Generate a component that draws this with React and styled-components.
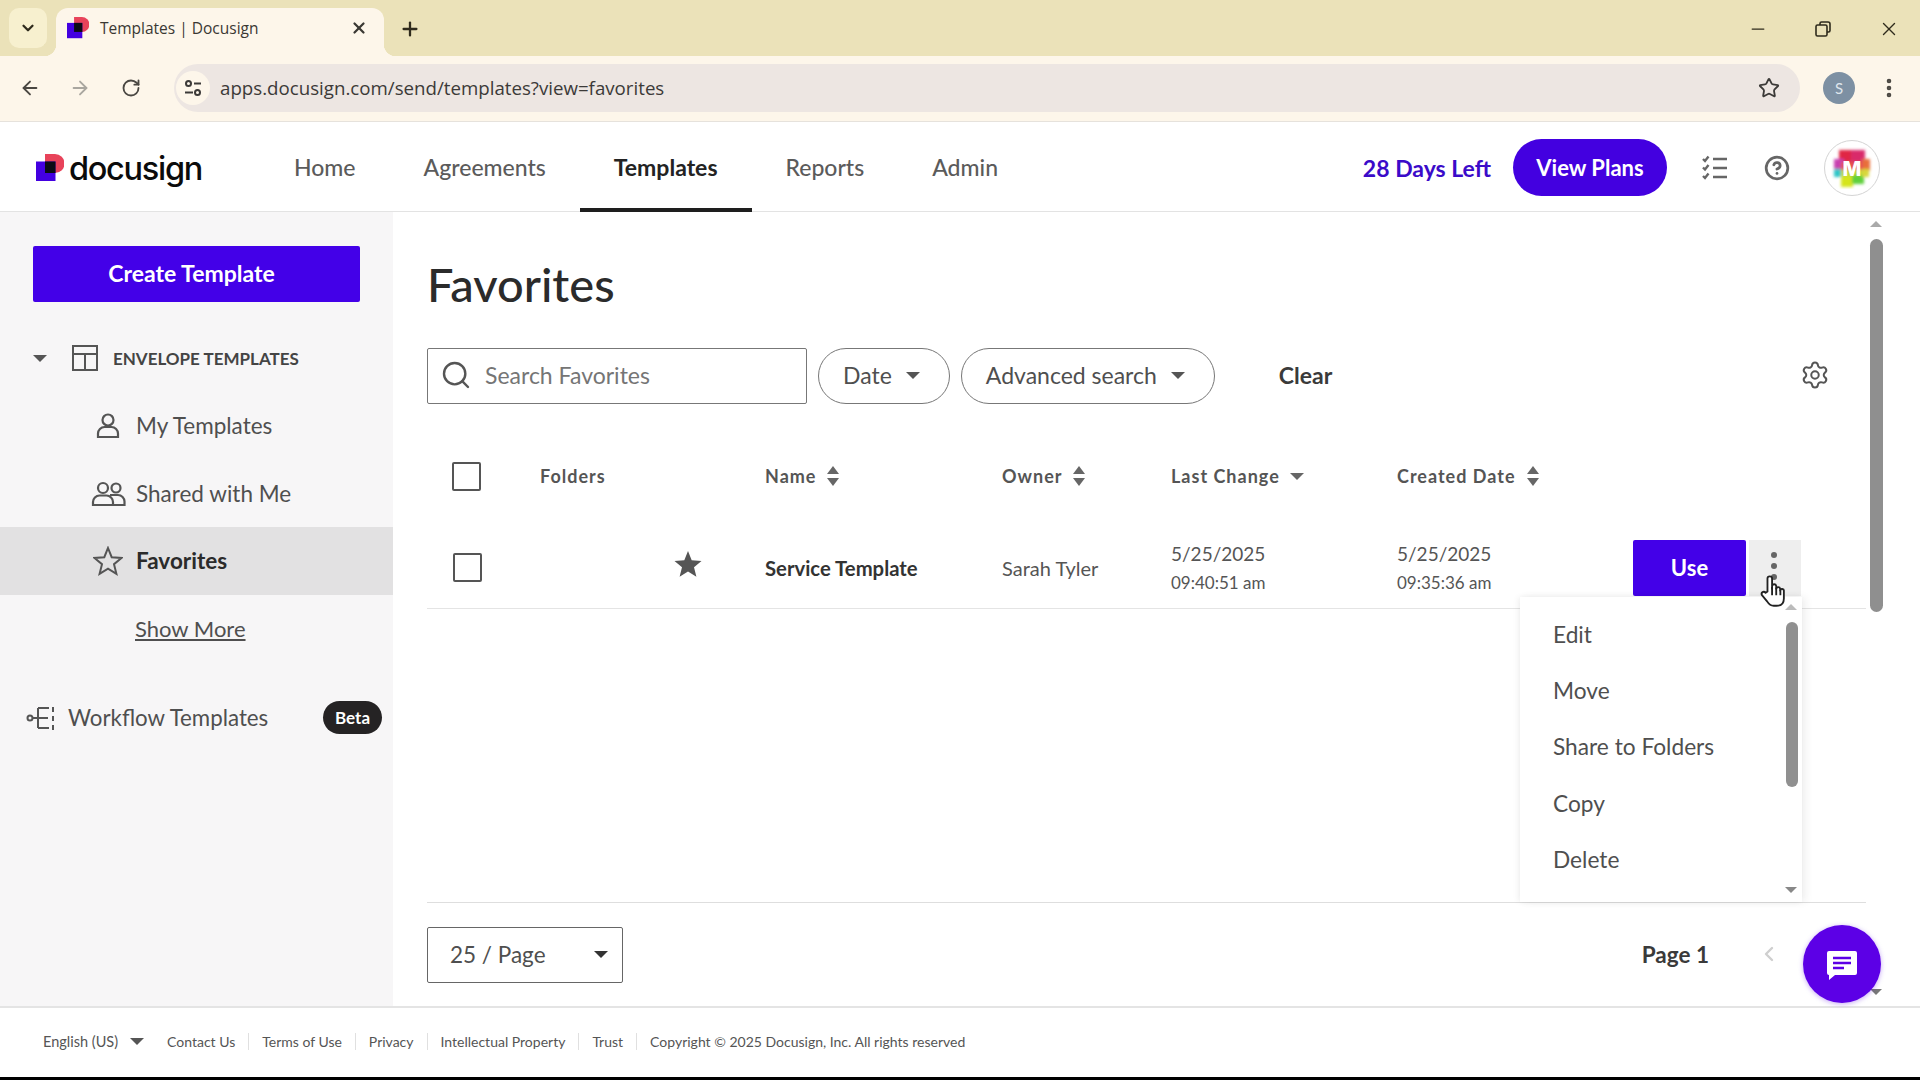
import styled, { createGlobalStyle } from "styled-components";
import {
  ArrowLeft,
  ArrowRight,
  ChevronDown,
  ChevronLeft,
  CircleHelp,
  EllipsisVertical,
  Minus,
  Plus,
  RotateCw,
  Search,
  Settings,
  Star,
  X,
} from "lucide-react";

const GlobalStyle = createGlobalStyle`
  html, body {
    margin: 0;
    padding: 0;
    background: #000;
  }
  body {
    font-family: Lato, "Open Sans", sans-serif;
    color: #3d3d3d;
  }
  * {
    box-sizing: border-box;
  }
`;

const Page = styled.div`
  width: 1920px;
  height: 1080px;
  display: flex;
  flex-direction: column;
  overflow: hidden;
  background: #fff;
`;

/* browser chrome */
const TabStrip = styled.div`
  height: 56px;
  flex: none;
  background: #ebe2b9;
  display: flex;
  align-items: flex-end;
  padding-left: 9px;
  color: #2f2b1c;
`;
const TabSearch = styled.div`
  width: 38px;
  height: 40px;
  margin-bottom: 8px;
  border-radius: 10px;
  background: #f7f0cf;
  display: flex;
  align-items: center;
  justify-content: center;
`;
const Tab = styled.div`
  position: relative;
  width: 328px;
  height: 48px;
  margin-left: 9px;
  border-radius: 12px 12px 0 0;
  background: #fdf6ea;
  display: flex;
  align-items: center;
  padding: 0 16px 8px 11px;
  font-family: "Open Sans", sans-serif;
  font-size: 15.5px;
  color: #3a3833;
  &::before,
  &::after {
    content: "";
    position: absolute;
    bottom: 0;
    width: 12px;
    height: 12px;
  }
  &::before {
    left: -12px;
    background: radial-gradient(circle at 0 0, #ebe2b9 12px, #fdf6ea 12.5px);
  }
  &::after {
    right: -12px;
    background: radial-gradient(circle at 100% 0, #ebe2b9 12px, #fdf6ea 12.5px);
  }
`;
const TabTitle = styled.span`
  flex: 1;
  margin-left: 11px;
`;
const NewTab = styled.div`
  margin: 0 0 16px 15px;
  display: flex;
`;
const WindowControls = styled.div`
  margin: 0 20px 16px auto;
  display: flex;
  gap: 45px;
  align-items: center;
`;

const Toolbar = styled.div`
  height: 66px;
  flex: none;
  background: #fdf6ea;
  border-bottom: 1px solid #e6e2dc;
  display: flex;
  align-items: center;
  padding: 0 0 2px 19px;
  color: #4a4742;
`;
const NavArrows = styled.div`
  display: flex;
  gap: 28px;
  align-items: center;
`;
const ReloadSlot = styled.span`
  display: flex;
  margin-left: 2px;
`;
const AddressBar = styled.div`
  width: 1626px;
  height: 48px;
  margin-left: 33px;
  border-radius: 24px;
  background: #ede6e2;
  display: flex;
  align-items: center;
  padding: 0 20px 0 0;
  font-family: "Open Sans", sans-serif;
  font-size: 18.7px;
  color: #3c3a38;
`;
const SiteBadge = styled.div`
  width: 34px;
  height: 34px;
  margin: 0 10px 0 2px;
  border-radius: 50%;
  background: #fdf6ea;
  display: flex;
  align-items: center;
  justify-content: center;
`;
const Url = styled.span`
  flex: 1;
`;
const ProfileDot = styled.div`
  width: 32px;
  height: 32px;
  margin-left: 23px;
  border-radius: 50%;
  background: #7d90a3;
  color: #dfe6ec;
  font-size: 15px;
  display: flex;
  align-items: center;
  justify-content: center;
`;
const ChromeMenu = styled.div`
  margin-left: 22px;
  display: flex;
`;

/* app header */
const Header = styled.header`
  height: 90px;
  flex: none;
  background: #fff;
  border-bottom: 1px solid #e3e3e3;
  display: flex;
  align-items: center;
  padding: 0 40px 0 36px;
`;
const Logo = styled.div`
  display: flex;
  align-items: center;
  gap: 5px;
  width: 224px;
  margin-top: 3px;
`;
const LogoWord = styled.span`
  font-family: Inter, sans-serif;
  font-size: 32.5px;
  font-weight: 500;
  letter-spacing: -1.3px;
  color: #0b0b0b;
`;
const Nav = styled.nav`
  display: flex;
  align-self: stretch;
`;
const NavItem = styled.a`
  display: flex;
  align-items: center;
  padding: 3px 34px 0;
  height: 90px;
  font-size: 23px;
  font-weight: ${({ $active }) => ($active ? 700 : 500)};
  color: ${({ $active }) => ($active ? "#232323" : "#5b5b5b")};
  border-bottom: 4px solid ${({ $active }) => ($active ? "#1e1e1e" : "transparent")};
`;
const HeaderRight = styled.div`
  margin-left: auto;
  display: flex;
  align-items: center;
  padding-top: 2px;
`;
const DaysLeft = styled.span`
  font-size: 23px;
  font-weight: 700;
  color: #3b0bc9;
  margin-right: 22px;
`;
const PlansButton = styled.button`
  width: 154px;
  height: 57px;
  border: 0;
  border-radius: 29px;
  background: #4300e0;
  color: #fff;
  font-family: inherit;
  font-size: 22px;
  font-weight: 700;
`;
const HeaderIcon = styled.div`
  margin-left: ${({ $gap }) => $gap}px;
  display: flex;
  color: #666;
`;
const AvatarRing = styled.div`
  width: 56px;
  height: 56px;
  margin-left: 34px;
  border-radius: 50%;
  border: 1px solid #d4d4d4;
  background: #fff;
  display: flex;
  align-items: center;
  justify-content: center;
`;

/* body */
const Body = styled.div`
  flex: 1;
  min-height: 0;
  display: flex;
`;
const Sidebar = styled.aside`
  width: 393px;
  flex: none;
  background: #f7f6f7;
  padding-top: 34px;
  display: flex;
  flex-direction: column;
`;
const CreateButton = styled.button`
  width: 327px;
  height: 56px;
  margin-left: 33px;
  padding: 0 10px 2px 0;
  border: 0;
  border-radius: 2px;
  background: #4300e8;
  color: #fff;
  font-family: inherit;
  font-size: 23px;
  font-weight: 700;
`;
const SectionRow = styled.div`
  height: 56px;
  margin: 28px 0 6px;
  display: flex;
  align-items: center;
  padding-left: 33px;
  font-size: 17px;
  font-weight: 700;
  color: #444;
`;
const Caret = styled.span`
  width: 0;
  height: 0;
  flex: none;
  border-left: ${({ $size = 7 }) => $size}px solid transparent;
  border-right: ${({ $size = 7 }) => $size}px solid transparent;
  border-top: ${({ $size = 7 }) => $size}px solid ${({ $color = "#555" }) => $color};
`;
const SectionIcon = styled.div`
  margin: 0 15px 0 25px;
  display: flex;
`;
const SideItem = styled.div`
  height: 67.5px;
  display: flex;
  align-items: center;
  padding-left: 90px;
  gap: 10px;
  font-size: 22.5px;
  font-weight: ${({ $active }) => ($active ? 700 : 400)};
  color: ${({ $active }) => ($active ? "#2b2b2b" : "#4f4f4f")};
  background: ${({ $active }) => ($active ? "#e2e1e2" : "transparent")};
`;
const SideIconSlot = styled.span`
  width: 36px;
  display: flex;
  justify-content: center;
`;
const ShowMore = styled.a`
  height: 67px;
  display: flex;
  align-items: center;
  padding-left: 135px;
  font-size: 22px;
  color: #4f4f4f;
  text-decoration: underline;
`;
const WorkflowRow = styled.div`
  margin-top: 28px;
  height: 56px;
  display: flex;
  align-items: center;
  padding: 0 11px 0 26px;
  gap: 12px;
  font-size: 22.3px;
  color: #4f4f4f;
`;
const BetaBadge = styled.span`
  margin-left: auto;
  width: 59px;
  height: 33px;
  border-radius: 17px;
  background: #252324;
  color: #fff;
  font-size: 17px;
  font-weight: 700;
  display: flex;
  align-items: center;
  justify-content: center;
`;

/* main */
const Main = styled.main`
  flex: 1;
  min-width: 0;
  display: flex;
  position: relative;
`;
const Content = styled.div`
  flex: 1;
  min-width: 0;
  padding-left: 34px;
  display: flex;
  flex-direction: column;
`;
const Title = styled.h1`
  margin: 41px 0 0;
  height: 63px;
  font-size: 47px;
  line-height: 62px;
  font-weight: 500;
  color: #2b2b2b;
`;
const FilterRow = styled.div`
  margin-top: 32px;
  height: 56px;
  display: flex;
  align-items: center;
  gap: 11px;
  padding-right: 36px;
`;
const SearchBox = styled.div`
  width: 380px;
  height: 56px;
  border: 1px solid #777;
  border-radius: 2px;
  display: flex;
  align-items: center;
  gap: 13px;
  padding: 0 0 2px 12px;
  font-size: 23px;
  color: #757575;
`;
const Pill = styled.div`
  height: 56px;
  padding: 0 29px 2px 24px;
  border: 1px solid #777;
  border-radius: 28px;
  display: flex;
  align-items: center;
  gap: 14px;
  font-size: 23px;
  color: #4f4f4f;
`;
const ClearLink = styled.span`
  margin: -3px 0 0 53px;
  font-size: 23px;
  font-weight: 700;
  color: #3a3a3a;
`;
const GearSlot = styled.div`
  margin: -2px 0 0 auto;
  display: flex;
  color: #555;
`;
const Row = styled.div`
  display: grid;
  grid-template-columns: 113px 225px 237px 169px 226px 220px 1fr;
  align-items: center;
`;
const HeadRow = styled(Row)`
  margin-top: 36px;
  height: 72px;
`;
const BodyRow = styled(Row)`
  height: 97px;
  padding-top: 15px;
  border-bottom: 1px solid #e4e4e4;
`;
const CheckCell = styled.div`
  padding-left: ${({ $inset }) => $inset}px;
  display: flex;
`;
const Check = styled.span`
  width: 29px;
  height: 29px;
  border: 2px solid #555;
  border-radius: 2px;
  background: #fff;
`;
const HeadCell = styled.div`
  display: flex;
  align-items: center;
  gap: 10px;
  font-size: 18px;
  font-weight: 700;
  letter-spacing: 1px;
  color: #555;
`;
const SortIcon = styled.svg`
  width: 14px;
  height: 22px;
  flex: none;
`;
const StarCell = styled.div`
  display: flex;
  justify-content: flex-end;
  padding-right: 62px;
  margin-top: -8px;
`;
const NameCell = styled.div`
  font-size: 20.3px;
  font-weight: 700;
  color: #333;
`;
const OwnerCell = styled.div`
  font-size: 20px;
  color: #555;
`;
const DateCell = styled.div`
  display: flex;
  flex-direction: column;
  gap: 5px;
  padding-top: 2px;
  font-size: 19px;
  line-height: 24px;
  color: #555;
`;
const DateTime = styled.span`
  font-size: 17px;
`;
const Actions = styled.div`
  display: flex;
  gap: 3px;
  justify-content: flex-end;
  padding-right: 65px;
  height: 56px;
`;
const UseButton = styled.button`
  width: 113px;
  height: 56px;
  border: 0;
  border-radius: 2px;
  background: #4300e8;
  color: #fff;
  font-family: inherit;
  font-size: 22px;
  font-weight: 700;
`;
const KebabButton = styled.div`
  width: 52px;
  height: 56px;
  background: #eee;
  padding: 10px 0 0 20px;
  position: relative;
`;
const Cursor = styled.svg`
  position: absolute;
  left: 10px;
  top: 34px;
  z-index: 3;
`;
const Spacer = styled.div`
  flex: 1;
`;
const PagerRow = styled.div`
  height: 104px;
  flex: none;
  border-top: 1px solid #dedede;
  display: flex;
  align-items: flex-start;
  padding-top: 24px;
`;
const PerPage = styled.div`
  width: 196px;
  height: 56px;
  border: 1px solid #666;
  border-radius: 2px;
  display: flex;
  align-items: center;
  justify-content: space-between;
  padding: 0 14px 2px 22px;
  font-size: 22.5px;
  color: #4f4f4f;
`;
const PageLabel = styled.span`
  margin-left: auto;
  height: 54px;
  display: flex;
  align-items: center;
  font-size: 22.5px;
  font-weight: 700;
  color: #3a3a3a;
`;
const PrevPage = styled.span`
  height: 54px;
  width: 157px;
  padding-left: 48px;
  display: flex;
  align-items: center;
  color: #cfcfcf;
`;

const ChatBubble = styled.div`
  position: absolute;
  left: 1410px;
  top: 713px;
  width: 78px;
  height: 78px;
  border-radius: 50%;
  background: #5c00e6;
  display: flex;
  align-items: center;
  justify-content: center;
  padding-top: 3px;
  box-shadow: 0 1px 5px rgba(90, 0, 230, 0.35);
`;

const Menu = styled.div`
  position: absolute;
  left: 1127px;
  top: 385px;
  width: 282px;
  height: 305px;
  background: #fff;
  box-shadow: -2px 0 6px rgba(0, 0, 0, 0.06), 4px 0 8px rgba(0, 0, 0, 0.06);
  padding-top: 9px;
  z-index: 2;
`;
const MenuItem = styled.div`
  height: 56.3px;
  display: flex;
  align-items: center;
  padding-left: 33px;
  font-size: 22.7px;
  color: #4f4f4f;
`;
const MenuThumb = styled.div`
  position: absolute;
  right: 4px;
  top: 25px;
  width: 12px;
  height: 165px;
  border-radius: 6px;
  background: #909090;
`;
const MenuArrow = styled.span`
  position: absolute;
  right: 5px;
  ${({ $up }) => ($up ? "top: 7px;" : "bottom: 9px;")}
  width: 0;
  height: 0;
  border-left: 6px solid transparent;
  border-right: 6px solid transparent;
  ${({ $up }) => ($up ? "border-bottom: 6px solid #bbb;" : "border-top: 6px solid #888;")}
`;

const ScrollTrack = styled.div`
  width: 20px;
  flex: none;
  margin-right: 34px;
  padding-top: 9px;
  display: flex;
  flex-direction: column;
  align-items: center;
`;
const ScrollThumb = styled.div`
  width: 13px;
  height: 373px;
  margin-top: 12px;
  border-radius: 7px;
  background: #8f8f8f;
`;
const ScrollArrowUp = styled.span`
  width: 0;
  height: 0;
  border-left: 6px solid transparent;
  border-right: 6px solid transparent;
  border-bottom: 6px solid #aaa;
`;
const ScrollArrowDown = styled.span`
  margin-top: auto;
  margin-bottom: 11px;
  width: 0;
  height: 0;
  border-left: 6px solid transparent;
  border-right: 6px solid transparent;
  border-top: 6px solid #777;
`;

/* footer */
const Footer = styled.footer`
  height: 71px;
  flex: none;
  border-top: 2px solid #e4e4e4;
  background: #fff;
  display: flex;
  align-items: center;
  padding: 0 0 2px 43px;
  font-size: 14px;
  color: #555;
`;
const FooterLang = styled.span`
  display: flex;
  align-items: center;
  gap: 12px;
  margin-right: 23px;
  font-size: 14.5px;
`;
const FooterLink = styled.span`
  padding-right: 13px;
  margin-right: 13px;
  border-right: 1px solid #e0e0e0;
  &:last-of-type {
    border-right: 0;
    margin-right: 15px;
  }
`;
const BlackEdge = styled.div`
  height: 3px;
  flex: none;
  background: #000;
`;

function LogoMark({ size = 28 }) {
  return (
    <svg width={size} height={size} viewBox="0 0 28 28">
      <path d="M9 0h10a9.500 9.500 0 0 1 0 19H9z" fill="#e8435a" />
      <rect x="0" y="7.500" width="19.500" height="19.500" fill="#4300e0" />
      <path d="M9 7.500h10.500V19H9z" fill="#0b0b14" />
    </svg>
  );
}

function SortArrows() {
  return (
    <SortIcon viewBox="0 0 14 22">
      <path d="M7 1l6 8H1z" fill="#666" />
      <path d="M7 21l6-8H1z" fill="#666" />
    </SortIcon>
  );
}

function StarShape({ size, filled }) {
  return (
    <svg width={size} height={size} viewBox="0 0 30 30">
      <path
        d="M15 2l3.700 9.200 9.800.700-7.500 6.300 2.400 9.600L15 22.600l-8.400 5.200L9 18.200 1.500 11.900l9.800-.700z"
        fill={filled ? "#555" : "none"}
        stroke="#555"
        strokeWidth={filled ? 0 : 2}
      />
    </svg>
  );
}

export default function App() {
  return (
    <Page>
      <GlobalStyle />
      <TabStrip>
        <TabSearch>
          <ChevronDown size={18} strokeWidth={3} />
        </TabSearch>
        <Tab>
          <LogoMark size={22} />
          <TabTitle>Templates | Docusign</TabTitle>
          <X size={18} strokeWidth={3} />
        </Tab>
        <NewTab>
          <Plus size={22} strokeWidth={2.5} />
        </NewTab>
        <WindowControls>
          <Minus size={20} strokeWidth={1.5} />
          <svg width="20" height="20" viewBox="0 0 20 20" fill="none" stroke="#2f2b1c" strokeWidth="1.6">
            <rect x="3" y="6" width="11" height="11" rx="1.5" />
            <path d="M7 6V4.500A1.500 1.500 0 0 1 8.500 3H15a2 2 0 0 1 2 2v6.500a1.500 1.500 0 0 1-1.500 1.500H14" />
          </svg>
          <X size={22} strokeWidth={1.5} />
        </WindowControls>
      </TabStrip>
      <Toolbar>
        <NavArrows>
          <ArrowLeft size={22} strokeWidth={2} />
          <ArrowRight size={22} strokeWidth={2} color="#a9a69f" />
          <ReloadSlot>
            <RotateCw size={20} strokeWidth={2.2} />
          </ReloadSlot>
        </NavArrows>
        <AddressBar>
          <SiteBadge>
            <svg width="20" height="20" viewBox="0 0 20 20" fill="none" stroke="#3c3a38" strokeWidth="2">
              <circle cx="5.500" cy="5.500" r="2.500" />
              <path d="M11 5.500h7M2 14.500h8" />
              <circle cx="14.500" cy="14.500" r="2.500" />
            </svg>
          </SiteBadge>
          <Url>apps.docusign.com/send/templates?view=favorites</Url>
          <Star size={22} strokeWidth={2} />
        </AddressBar>
        <ProfileDot>S</ProfileDot>
        <ChromeMenu>
          <EllipsisVertical size={24} strokeWidth={2.6} />
        </ChromeMenu>
      </Toolbar>
      <Header>
        <Logo>
          <LogoMark size={28} />
          <LogoWord>docusign</LogoWord>
        </Logo>
        <Nav>
          <NavItem>Home</NavItem>
          <NavItem>Agreements</NavItem>
          <NavItem $active>Templates</NavItem>
          <NavItem>Reports</NavItem>
          <NavItem>Admin</NavItem>
        </Nav>
        <HeaderRight>
          <DaysLeft>28 Days Left</DaysLeft>
          <PlansButton>View Plans</PlansButton>
          <HeaderIcon $gap={35}>
            <svg width="26" height="26" viewBox="0 0 26 26" fill="none" stroke="#666" strokeWidth="2.4">
              <path d="M1 4l2 2 3.500-4.500M1 12.500l2 2 3.500-4.500M1 21l2 2 3.500-4.500" />
              <path d="M11 4h14M11 13h14M11 22h14" />
            </svg>
          </HeaderIcon>
          <HeaderIcon $gap={36}>
            <CircleHelp size={26} strokeWidth={2.5} />
          </HeaderIcon>
          <AvatarRing>
            <svg width="42" height="42" viewBox="0 0 42 42">
              <defs>
                <filter id="smear">
                  <feGaussianBlur stdDeviation="1.4" />
                </filter>
              </defs>
              <g filter="url(#smear)">
                <rect x="8" y="3" width="14" height="14" fill="#e02544" />
                <rect x="20" y="3" width="14" height="14" fill="#d92a6a" />
                <rect x="31" y="12" width="8" height="12" fill="#e8703a" />
                <rect x="3" y="12" width="10" height="10" fill="#c83fb0" />
                <rect x="3" y="22" width="10" height="8" fill="#2fc6c8" />
                <rect x="10" y="15" width="22" height="8" fill="#e5574f" />
                <rect x="10" y="23" width="22" height="8" fill="#c2d83c" />
                <rect x="10" y="29" width="12" height="11" fill="#d5e51f" />
                <rect x="21" y="28" width="12" height="9" fill="#5fd03a" />
                <rect x="31" y="22" width="7" height="8" fill="#d8d73a" />
              </g>
              <text x="21" y="29" textAnchor="middle" fontFamily="Inter, sans-serif" fontSize="20" fontWeight="800" fill="#fff">
                M
              </text>
            </svg>
          </AvatarRing>
        </HeaderRight>
      </Header>
      <Body>
        <Sidebar>
          <CreateButton>Create Template</CreateButton>
          <SectionRow>
            <Caret $size={7} />
            <SectionIcon>
              <svg width="26" height="26" viewBox="0 0 26 26" fill="none" stroke="#555" strokeWidth="2">
                <rect x="1" y="1" width="24" height="24" />
                <path d="M1 9h24M13 9v16" />
              </svg>
            </SectionIcon>
            ENVELOPE TEMPLATES
          </SectionRow>
          <SideItem>
            <SideIconSlot>
              <svg width="24" height="25" viewBox="0 0 24 25" fill="none" stroke="#555" strokeWidth="2.2">
                <circle cx="12" cy="7" r="5.500" />
                <path d="M2 24v-3.500a6.500 6.500 0 0 1 6.500-6.500h7a6.500 6.500 0 0 1 6.500 6.500V24z" />
              </svg>
            </SideIconSlot>
            My Templates
          </SideItem>
          <SideItem>
            <SideIconSlot>
              <svg width="35" height="25" viewBox="0 0 35 25" fill="none" stroke="#555" strokeWidth="2.2">
                <circle cx="12" cy="7" r="5" />
                <circle cx="25" cy="7" r="4.500" />
                <path d="M2 24v-3a6.500 6.500 0 0 1 6.500-6.500h7A6.500 6.500 0 0 1 22 21v3z" />
                <path d="M19 14h8a6.500 6.500 0 0 1 6.500 6.500V24H22" />
              </svg>
            </SideIconSlot>
            Shared with Me
          </SideItem>
          <SideItem $active>
            <SideIconSlot>
              <StarShape size={30} />
            </SideIconSlot>
            Favorites
          </SideItem>
          <ShowMore>Show More</ShowMore>
          <WorkflowRow>
            <svg width="30" height="26" viewBox="0 0 30 26" fill="none" stroke="#555" strokeWidth="2">
              <circle cx="4" cy="13" r="2.500" />
              <path d="M7 13h15M12 3h11M12 3v20M12 23h11" />
              <path d="M27 2v5M27 11v5M27 20v5" />
            </svg>
            Workflow Templates
            <BetaBadge>Beta</BetaBadge>
          </WorkflowRow>
        </Sidebar>
        <Main>
          <Content>
            <Title>Favorites</Title>
            <FilterRow>
              <SearchBox>
                <Search size={32} strokeWidth={1.8} color="#555" />
                Search Favorites
              </SearchBox>
              <Pill>
                Date
                <Caret $size={7} />
              </Pill>
              <Pill>
                Advanced search
                <Caret $size={7} />
              </Pill>
              <ClearLink>Clear</ClearLink>
              <GearSlot>
                <Settings size={30} strokeWidth={1.6} />
              </GearSlot>
            </FilterRow>
            <HeadRow>
              <CheckCell $inset={25}>
                <Check />
              </CheckCell>
              <HeadCell>Folders</HeadCell>
              <HeadCell>
                Name
                <SortArrows />
              </HeadCell>
              <HeadCell>
                Owner
                <SortArrows />
              </HeadCell>
              <HeadCell>
                Last Change
                <Caret $size={7} $color="#666" />
              </HeadCell>
              <HeadCell>
                Created Date
                <SortArrows />
              </HeadCell>
            </HeadRow>
            <BodyRow>
              <CheckCell $inset={26}>
                <Check />
              </CheckCell>
              <StarCell>
                <StarShape size={30} filled />
              </StarCell>
              <NameCell>Service Template</NameCell>
              <OwnerCell>Sarah Tyler</OwnerCell>
              <DateCell>
                5/25/2025
                <DateTime>09:40:51 am</DateTime>
              </DateCell>
              <DateCell>
                5/25/2025
                <DateTime>09:35:36 am</DateTime>
              </DateCell>
              <Actions>
                <UseButton>Use</UseButton>
                <KebabButton>
                  <svg width="10" height="32" viewBox="0 0 10 32" fill="#666">
                    <circle cx="5" cy="5" r="3" />
                    <circle cx="5" cy="16" r="3" />
                    <circle cx="5" cy="27" r="3" />
                  </svg>
                  <Cursor width="28" height="35" viewBox="0 0 30 38" fill="#fff" stroke="#222" strokeWidth="2" strokeLinejoin="round">
                    <path d="M9 19V5a2.500 2.500 0 0 1 5 0v11l0-3a2.300 2.300 0 0 1 4.500 0v3a2.200 2.200 0 0 1 4.300 0v2a2 2 0 0 1 4 .5v8c0 5-3 8-8 8h-3c-3.500 0-5.500-2-7-4.500L3 23c-1.500-3 2-5 4-2.500z" />
                    <path d="M14 14v9M18.500 15v8M23 17v6" />
                  </Cursor>
                </KebabButton>
              </Actions>
            </BodyRow>
            <Spacer />
            <PagerRow>
              <PerPage>
                25 / Page
                <Caret $size={7} $color="#333" />
              </PerPage>
              <PageLabel>Page 1</PageLabel>
              <PrevPage>
                <ChevronLeft size={24} strokeWidth={2.4} />
              </PrevPage>
            </PagerRow>
          </Content>
          <ScrollTrack>
            <ScrollArrowUp />
            <ScrollThumb />
            <ScrollArrowDown />
          </ScrollTrack>
          <Menu>
            <MenuItem>Edit</MenuItem>
            <MenuItem>Move</MenuItem>
            <MenuItem>Share to Folders</MenuItem>
            <MenuItem>Copy</MenuItem>
            <MenuItem>Delete</MenuItem>
            <MenuArrow $up />
            <MenuThumb />
            <MenuArrow />
          </Menu>
          <ChatBubble>
            <svg width="32" height="31" viewBox="0 0 32 31">
              <path d="M3 1h26a2 2 0 0 1 2 2v20a2 2 0 0 1-2 2H9l-6 5v-5a2 2 0 0 1-2-2V3a2 2 0 0 1 2-2z" fill="#fff" />
              <path d="M7 8h18M7 13h18M7 18h11" stroke="#5c00e6" strokeWidth="2.600" />
            </svg>
          </ChatBubble>
        </Main>
      </Body>
      <Footer>
        <FooterLang>
          English (US)
          <Caret $size={7} />
        </FooterLang>
        <FooterLink>Contact Us</FooterLink>
        <FooterLink>Terms of Use</FooterLink>
        <FooterLink>Privacy</FooterLink>
        <FooterLink>Intellectual Property</FooterLink>
        <FooterLink>Trust</FooterLink>
        <span>Copyright © 2025 Docusign, Inc. All rights reserved</span>
      </Footer>
      <BlackEdge />
    </Page>
  );
}
